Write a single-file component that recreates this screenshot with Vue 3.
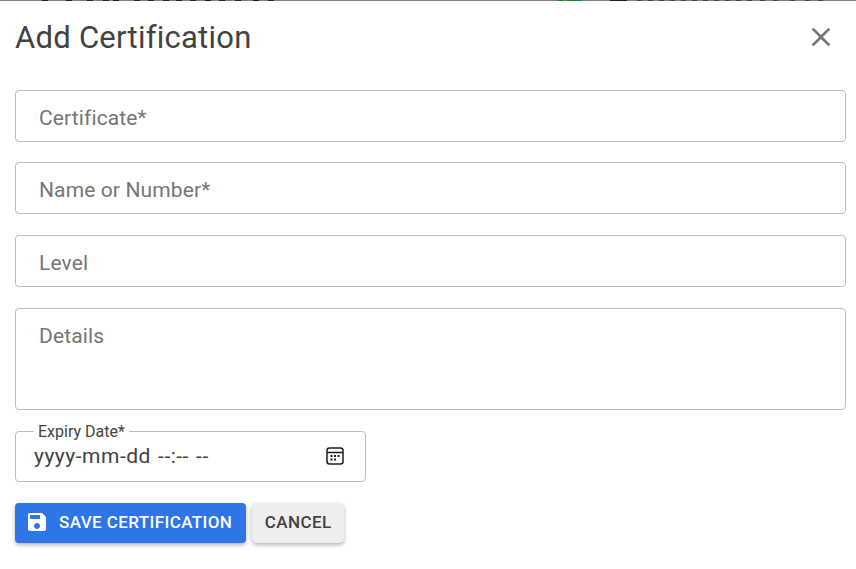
<script setup>
const fields = ['Certificate*', 'Name or Number*', 'Level']
const darkBits = [42, 66, 87, 103, 113, 134, 148, 163, 176, 190, 205, 219, 235, 253, 268]
const rightBits = [637, 648, 659, 670, 681, 692, 703, 714, 725, 736, 747, 760, 773, 790, 805, 818]
</script>

<template>
  <div class="dialog">
    <div class="strip">
      <i v-for="b in darkBits" :key="b" class="bit" :style="{ left: b + 'px' }"></i>
      <i v-for="b in rightBits" :key="b" class="bit light" :style="{ left: b + 'px' }"></i>
      <i class="g1"></i><i class="g2"></i><i class="s2"></i>
    </div>
    <header class="head">
      <h2 class="title">Add Certification</h2>
      <svg class="close" viewBox="0 0 24 24" width="32" height="32"><path fill="#757575" d="M19 6.41 17.59 5 12 10.59 6.41 5 5 6.41 10.59 12 5 17.59 6.41 19 12 13.41 17.59 19 19 17.59 13.41 12z"/></svg>
    </header>
    <form class="form">
      <div v-for="f in fields" :key="f" class="field">{{ f }}</div>
      <div class="field area">Details</div>
      <fieldset class="date">
        <legend class="legend">Expiry Date*</legend>
        <span class="dateval">yyyy-mm-dd --:-- --</span>
        <svg class="cal" viewBox="0 0 18 18" width="18" height="18">
          <rect x="1" y="1" width="16" height="16" rx="2.500" fill="none" stroke="#1c1c1c" stroke-width="1.500"/>
          <path d="M1 5.500h16" stroke="#1c1c1c" stroke-width="1.500"/>
          <path fill="#1c1c1c" d="M4.500 8h2v2h-2zM8 8h2v2H8zM11.500 8h2v2h-2zM4.500 11.500h2v2h-2zM8 11.500h2v2H8z"/>
        </svg>
      </fieldset>
      <div class="actions">
        <button type="button" class="btn primary">
          <svg viewBox="0 0 24 24" width="24" height="24"><path fill="#fff" d="M17 3H5c-1.110 0-2 .9-2 2v14c0 1.100.89 2 2 2h14c1.100 0 2-.9 2-2V7zm-5 16c-1.660 0-3-1.340-3-3s1.340-3 3-3 3 1.340 3 3-1.340 3-3 3m3-10H5V5h10z"/></svg>
          SAVE CERTIFICATION
        </button>
        <button type="button" class="btn plain">CANCEL</button>
      </div>
    </form>
  </div>
</template>

<style>
html, body { margin: 0; background: #fff; }
</style>

<style scoped>
.dialog {
  width: 856px;
  height: 569px;
  overflow: hidden;
  position: relative;
  box-sizing: border-box;
  padding: 0 10px 0 15px;
  background: #fff;
  font-family: Roboto, "Liberation Sans", sans-serif;
}
.strip { position: absolute; inset: 0 0 auto 0; height: 1px; background: #808080; }
.bit { position: absolute; top: 0; width: 6px; height: 1px; background: #222; }
.light { width: 5px; background: #444; }
.g1 { position: absolute; left: 558px; width: 5px; height: 1px; background: #0f8a3c; }
.g2 { position: absolute; left: 567px; width: 15px; height: 1px; background: #0f8a3c; }
.s2 { position: absolute; left: 610px; width: 17px; height: 1px; background: #222; }
.head {
  display: flex;
  justify-content: space-between;
  align-items: center;
  height: 89.6px;
  padding-bottom: 15px;
  box-sizing: border-box;
}
.title { margin: 0; font-size: 31px; font-weight: 400; color: #424242; letter-spacing: 0.25px; }
.close { margin: 0 9px 1px 0; }
.form { display: flex; flex-direction: column; gap: 20.8px; }
.field {
  height: 52px;
  box-sizing: border-box;
  border: 1px solid #bdbdbd;
  border-radius: 4px;
  padding: 4px 24px 0 23px;
  display: flex;
  align-items: center;
  font-size: 21px;
  letter-spacing: 0.12px;
  color: #757575;
}
.area { height: 102px; align-items: flex-start; padding-top: 15px; }
.date {
  width: 351px;
  height: 59px;
  margin: -8px 0 0;
  padding: 3px 20px 0 18px;
  box-sizing: border-box;
  border: 1px solid #bdbdbd;
  border-radius: 4px;
  display: flex;
  align-items: center;
  justify-content: space-between;
}
.legend { padding: 0 4px; margin-left: 0; font-size: 16px; color: #424242; line-height: 18px; }
.dateval { font-size: 21px; color: #424242; letter-spacing: 0.5px; word-spacing: 1.500px; }
.cal { margin-right: 1px; }
.actions { display: flex; gap: 6px; }
.btn {
  height: 40px;
  border: 0;
  border-radius: 4px;
  font: 500 17px Roboto, "Liberation Sans", sans-serif;
  letter-spacing: 0.4px;
  display: flex;
  align-items: center;
  box-shadow: 0 2px 4px rgba(0,0,0,.3);
}
.primary { background: #2e75e8; color: #fff; padding: 0 14px 2px 10px; gap: 10px; }
.plain { background: #eeeeee; color: #424242; padding: 0 12px 2px 12.5px; border-radius: 5px; }
</style>
